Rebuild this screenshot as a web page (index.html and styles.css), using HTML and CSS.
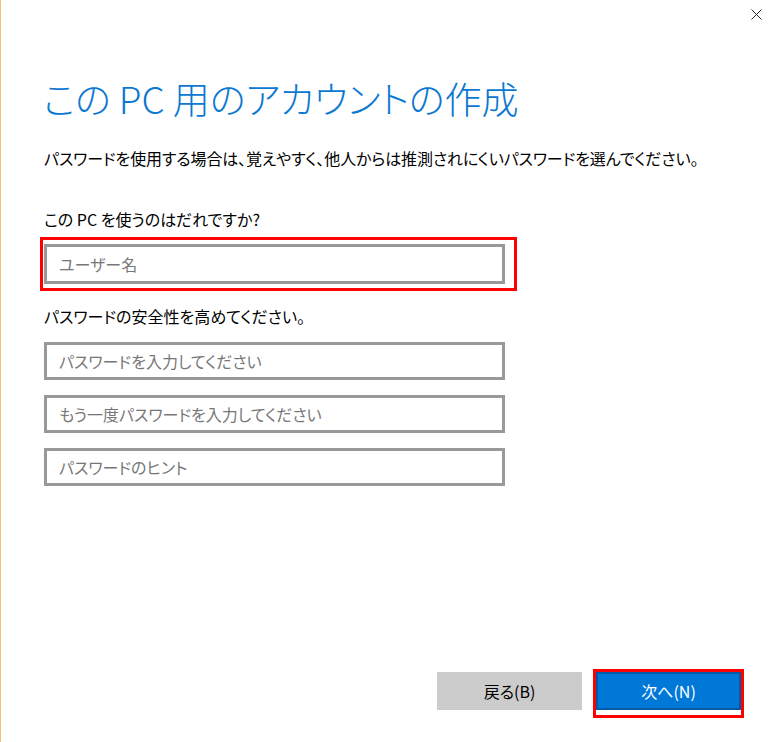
FILE: index.html
```html
<!DOCTYPE html>
<html lang="ja">
<head>
<meta charset="utf-8">
<link rel="stylesheet" href="styles.css">
</head>
<body>
<div class="window">
  <div class="titlebar">
    <svg class="close" width="11" height="11" viewBox="0 0 11 11"><path d="M0.5 0.5L10.5 10.5M10.5 0.5L0.5 10.5" stroke="#2b2b2b" stroke-width="1" fill="none"/></svg>
  </div>
  <main class="content">
    <h1 class="title">この PC 用のアカウントの作成</h1>
    <p class="intro">パスワードを使用する場合は、覚えやすく、他人からは推測されにくいパスワードを選んでください。</p>
    <p class="label first">この PC を使うのはだれですか?</p>
    <div class="highlight user">
      <div class="field tall">ユーザー名</div>
    </div>
    <p class="label second">パスワードの安全性を高めてください。</p>
    <div class="fields">
      <div class="field">パスワードを入力してください</div>
      <div class="field">もう一度パスワードを入力してください</div>
      <div class="field">パスワードのヒント</div>
    </div>
  </main>
  <footer class="buttons">
    <div class="btn back">戻る(B)</div>
    <div class="highlight next-wrap">
      <div class="btn next">次へ(N)</div>
    </div>
  </footer>
</div>
</body>
</html>
```

FILE: styles.css
```css
html, body {
  margin: 0;
  padding: 0;
  background: #ffffff;
}

body {
  font-family: "Noto Sans CJK JP", "Noto Sans", sans-serif;
  color: #000;
}

.window {
  height: 742px;
  box-sizing: border-box;
  border-left: 1px solid #f2c27c;
  display: flex;
  flex-direction: column;
}

.titlebar {
  display: flex;
  justify-content: flex-end;
  padding: 9px 18px 0 0;
  height: 11px;
}

.close {
  display: block;
}

.content {
  padding-left: 43px;
  display: flex;
  flex-direction: column;
  align-items: flex-start;
}

.title {
  margin: 52px 0 0 -1px;
  font-size: 37px;
  font-weight: 300;
  line-height: 52px;
  color: #0b78d1;
  font-feature-settings: "palt";
  letter-spacing: 0;
}

.intro {
  margin: 23px 0 0 0;
  font-size: 16px;
  line-height: 22px;
  letter-spacing: -0.12px;
  font-feature-settings: "palt";
}

.label {
  margin: 0;
  font-size: 16px;
  line-height: 22px;
  font-feature-settings: "palt";
}

.label.first {
  margin-top: 39px;
}

.label.second {
  margin-top: 21px;
}

.highlight {
  position: relative;
}

.highlight::after {
  content: "";
  position: absolute;
  border: 3px solid #ff0000;
  pointer-events: none;
}

.user {
  margin-top: 14px;
}

.user::after {
  left: -4px;
  top: -7px;
  right: -12px;
  bottom: -7px;
}

.field {
  box-sizing: border-box;
  width: 461px;
  height: 38px;
  border: 3px solid #999999;
  background: #fff;
  color: #777777;
  font-size: 16px;
  line-height: 32px;
  padding-left: 12px;
  font-feature-settings: "palt";
}

.field.tall {
  height: 40px;
  line-height: 34px;
}

.fields {
  margin-top: 15px;
  display: flex;
  flex-direction: column;
  gap: 15px;
}

.buttons {
  margin-top: auto;
  margin-bottom: 32px;
  display: flex;
  justify-content: flex-end;
  gap: 14px;
  padding-right: 39px;
}

.btn {
  box-sizing: border-box;
  width: 145px;
  height: 38px;
  display: flex;
  align-items: center;
  justify-content: center;
  font-size: 16px;
  font-feature-settings: "palt";
}

.back {
  background: #cccccc;
  color: #000;
}

.next {
  background: #0078d7;
  border: 2px solid #005aa6;
  color: #fff;
}

.next-wrap::after {
  left: -3px;
  top: -3px;
  right: -3px;
  bottom: -8px;
}
```
